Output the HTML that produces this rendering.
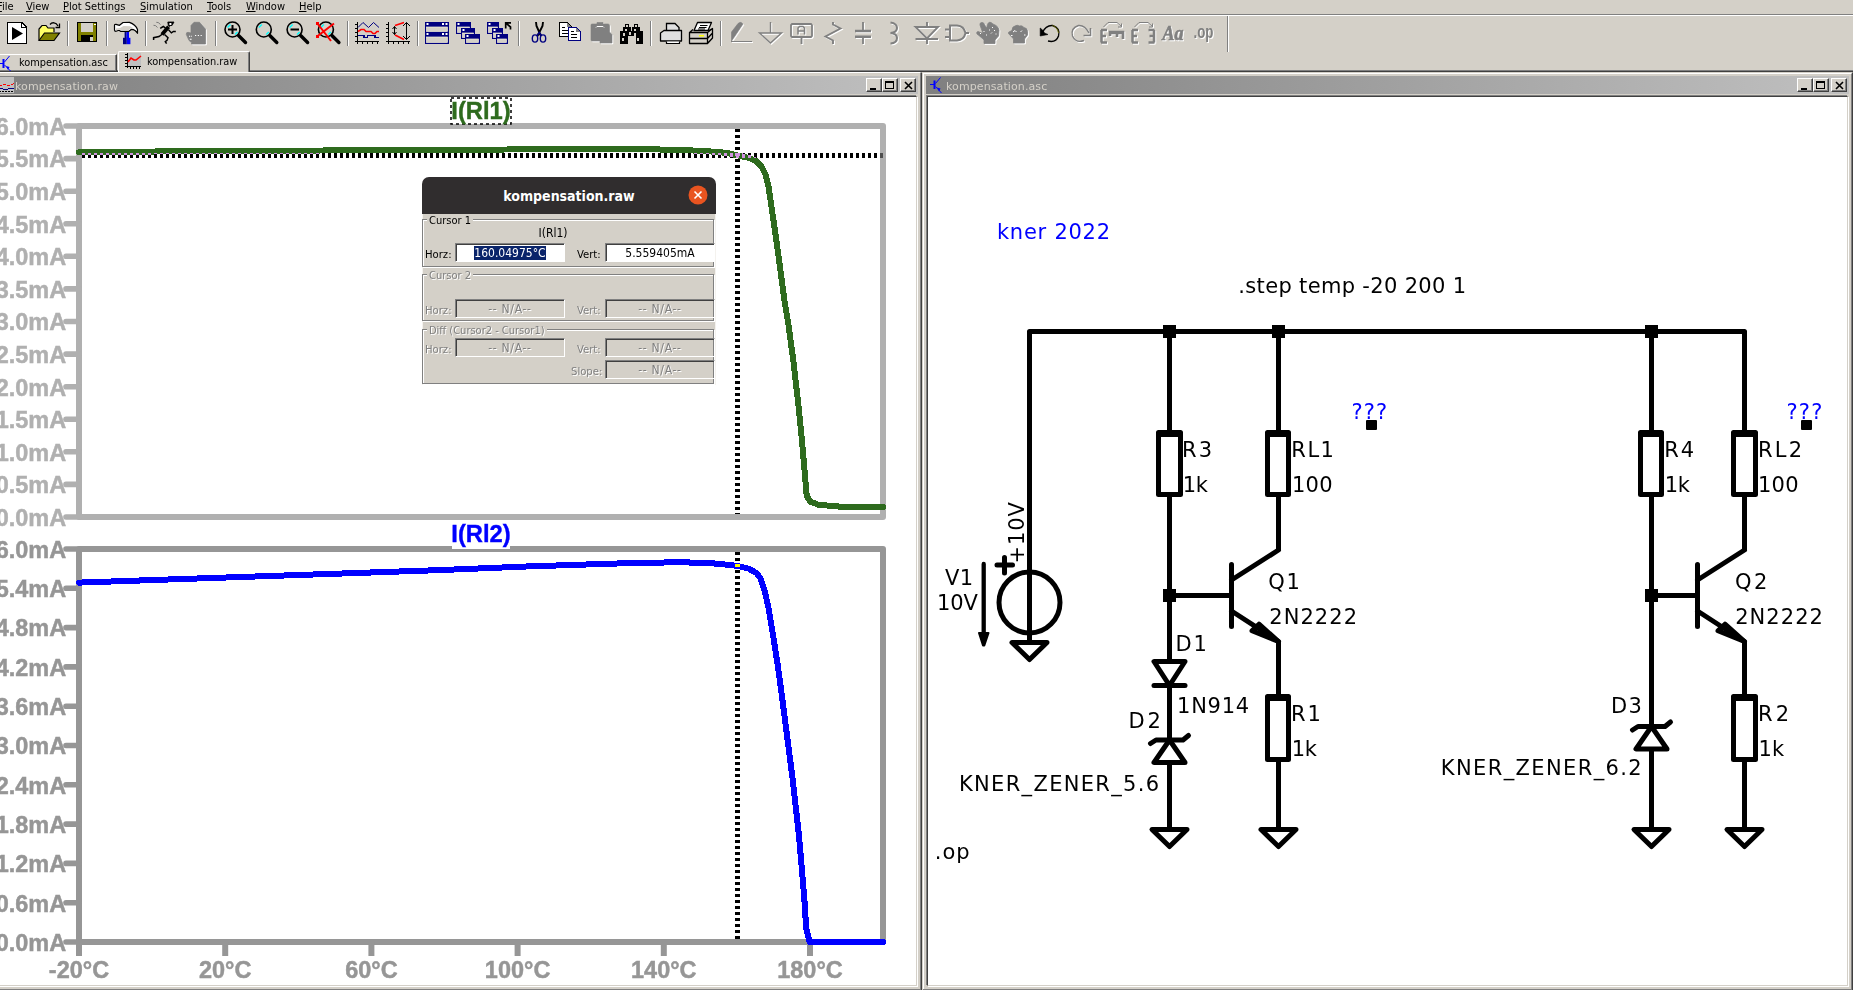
<!DOCTYPE html><html><head><meta charset="utf-8"><title>LTspice XVII - kompensation.raw</title><style>
html,body{margin:0;padding:0;}
body{width:1853px;height:990px;overflow:hidden;background:#d4d0c8;position:relative;font-family:"DejaVu Sans Condensed","DejaVu Sans","Liberation Sans",sans-serif;font-size:11px;color:#000;}
.abs{position:absolute;}
#menubar span{position:absolute;top:0px;white-space:nowrap;font-size:11px;line-height:14px;}
#menubar u{text-decoration:underline;text-underline-offset:1px;}
.hline{position:absolute;height:1px;}
.tabtxt{position:absolute;white-space:nowrap;font-size:10.9px;line-height:14px;}
.cap{position:absolute;height:18px;top:76px;}
.captxt{position:absolute;font-family:"DejaVu Sans","Liberation Sans",sans-serif;font-size:11px;line-height:18px;color:#d4d0c8;white-space:nowrap;letter-spacing:0.1px;}
.wbtn{position:absolute;width:16px;height:14px;top:78px;background:#d4d0c8;box-sizing:border-box;border:1px solid;border-color:#fff #404040 #404040 #fff;box-shadow:inset -1px -1px 0 #808080;}
</style></head><body>
<div id="menubar" class="abs" style="left:0;top:0;width:1853px;height:14px">
<span style="left:-3px"><u>F</u>ile</span>
<span style="left:26px"><u>V</u>iew</span>
<span style="left:63px"><u>P</u>lot Settings</span>
<span style="left:140px"><u>S</u>imulation</span>
<span style="left:207px"><u>T</u>ools</span>
<span style="left:246px"><u>W</u>indow</span>
<span style="left:299px"><u>H</u>elp</span>
</div>
<div class="hline" style="left:0;top:14px;width:1853px;background:#808080"></div>
<div class="hline" style="left:0;top:15px;width:1853px;background:#fff"></div>
<svg class="abs" style="left:0;top:16px" width="1853" height="36" viewBox="0 16 1853 36">
<g shape-rendering="crispEdges">
<path d="M7.5 22.5 H22 L26.5 27 V43.5 H7.5 Z" fill="#fff" stroke="#000" stroke-width="1.4"/>
<path d="M21.5 22.5 V27.5 H26.5" fill="none" stroke="#000" stroke-width="1"/>
<path d="M12 27 L23 33.5 L12 40 Z" fill="#000" shape-rendering="auto"/>
<path d="M39 40 V29 L42 25.5 H46 L48 28 H54 V32" fill="#ffff66" stroke="#000" stroke-width="1.2" shape-rendering="auto"/>
<path d="M39 40.5 L44.5 33 H59.5 L54 40.5 Z" fill="#808000" stroke="#000" stroke-width="1.2" shape-rendering="auto"/>
<path d="M50 24.5 C52 22 56 22 58 26 M55.5 27.5 H59.5 V23.5" fill="none" stroke="#000" stroke-width="1.3" shape-rendering="auto"/>
<rect x="67" y="21" width="1" height="25" fill="#808080"/><rect x="68" y="21" width="1" height="25" fill="#fff"/>
<rect x="77.5" y="22.5" width="19" height="19" fill="#808000" stroke="#000" stroke-width="1.4"/>
<rect x="81" y="23" width="12" height="9" fill="#d4d0c8"/>
<rect x="81" y="35" width="12" height="6.5" fill="#000"/>
<rect x="90" y="37" width="2.5" height="4" fill="#d4d0c8"/>
<rect x="94" y="23.5" width="1.5" height="1.5" fill="#fff"/>
<rect x="106" y="21" width="1" height="25" fill="#808080"/><rect x="107" y="21" width="1" height="25" fill="#fff"/>
</g>
<rect x="124.600" y="31" width="2" height="7" fill="#000080"/><rect x="126.600" y="31" width="2.400" height="7" fill="#0000ff"/>
<rect x="123" y="37.800" width="3.800" height="6.400" fill="#000080"/><rect x="126.800" y="37.800" width="3.600" height="6.400" fill="#0000ff"/>
<path d="M114.500 25.300 Q114.500 24.200 116 24.300 L119.500 25.300 L123 22.500 L129.500 22.400 Q135.500 24.500 137.500 29.500 L137.500 33.300 Q135.500 29.500 131.500 29.300 L129 31.300 H120.500 L119 30.300 L116 31.300 Q114.500 31.300 114.500 30 Z" fill="#fff" stroke="#000" stroke-width="1.200" stroke-linejoin="round"/>
<path d="M116 28.500 L120 28 L123.500 26 L130 26.300 L134 28.500 L131 28.300 L128.500 30.300 H121 L119.500 29.300 L116 30.300 Z" fill="#d4d0c8" stroke="none"/>
<rect x="145" y="21" width="1" height="25" fill="#808080"/><rect x="146" y="21" width="1" height="25" fill="#fff"/>
<g stroke="#000" fill="none" stroke-linecap="butt" stroke-linejoin="miter">
<path d="M167.800 22 H174 L172 25.500 H168.300 Z" fill="#000" stroke-width="0.800"/>
<rect x="169.400" y="23" width="2" height="2" fill="#fff" stroke="none"/>
<path d="M169.800 25.500 L168.800 26.500" stroke-width="1.600"/><path d="M168.600 26.800 L162 34.500" stroke-width="3.800" stroke-linecap="butt"/>
<path d="M165.500 28.200 L163.300 26.500 L160.200 28.400" stroke-width="1.500"/>
<path d="M168.500 29.800 L171.400 32.900 L173.400 31.500 H175.800" stroke-width="1.400"/>
<path d="M162.500 34 L159 36.600 L153.600 37.700 V40" stroke-width="1.500"/>
<path d="M164.500 34.500 L168 37.700 L167 40.400 L165.300 41.700 L166.600 43.700" stroke-width="1.500"/>
<path d="M156.300 22.300 L158.300 22.600 L160.500 24.500 M153.500 25.300 L155.500 25.600 L157.500 27.500" stroke="#707070" stroke-width="0.900"/>
</g>
<g transform="translate(1 1)" stroke="#fff" fill="#fff" color="#fff"><path d="M191.500 44 V42.800 L189 40.400 L186.300 34.500 Q186 32.300 188 32.300 L191 33 V25.500 L194 22.300 H199.500 L205.500 29 V44 Z" stroke-width="0.700" stroke-linejoin="round"/></g><g stroke="#808080" fill="#808080" color="#808080"><path d="M191.500 44 V42.800 L189 40.400 L186.300 34.500 Q186 32.300 188 32.300 L191 33 V25.500 L194 22.300 H199.500 L205.500 29 V44 Z" stroke-width="0.700" stroke-linejoin="round"/></g>
<path d="M195 35.500 H196.200 M197.800 35.500 H199 M200.600 35.500 H201.800 M189 36.300 H190 M190.800 36.300 H191.800 M189.800 39.300 H191.600" stroke="#fff" stroke-width="1.100" fill="none"/>
<rect x="215" y="21" width="1" height="25" fill="#808080"/><rect x="216" y="21" width="1" height="25" fill="#fff"/>
<line x1="238.5" y1="35.5" x2="245.5" y2="42.5" stroke="#000" stroke-width="3.4" stroke-linecap="round"/><circle cx="232.5" cy="29.5" r="7.5" fill="#d4d0c8" stroke="#000" stroke-width="1.6"/><path d="M227.5 27.5 L230.5 24.5" stroke="#00ffff" stroke-width="1.4" fill="none"/><path d="M235.0 34.5 L237.5 32.0" stroke="#00ffff" stroke-width="1.4" fill="none"/><path d="M228 29.5 H237 M232.5 25 V34" stroke="#000" stroke-width="2" fill="none"/>
<line x1="269.8" y1="35.5" x2="276.8" y2="42.5" stroke="#000" stroke-width="3.4" stroke-linecap="round"/><circle cx="263.8" cy="29.5" r="7.5" fill="#d4d0c8" stroke="#000" stroke-width="1.6"/><path d="M258.8 27.5 L261.8 24.5" stroke="#00ffff" stroke-width="1.4" fill="none"/><path d="M266.3 34.5 L268.8 32.0" stroke="#00ffff" stroke-width="1.4" fill="none"/>
<line x1="300.6" y1="35.5" x2="307.6" y2="42.5" stroke="#000" stroke-width="3.4" stroke-linecap="round"/><circle cx="294.6" cy="29.5" r="7.5" fill="#d4d0c8" stroke="#000" stroke-width="1.6"/><path d="M289.6 27.5 L292.6 24.5" stroke="#00ffff" stroke-width="1.4" fill="none"/><path d="M297.1 34.5 L299.6 32.0" stroke="#00ffff" stroke-width="1.4" fill="none"/><path d="M290.5 29.5 H299" stroke="#000" stroke-width="2" fill="none"/>
<line x1="331.9" y1="35.5" x2="338.9" y2="42.5" stroke="#000" stroke-width="3.4" stroke-linecap="round"/><circle cx="325.9" cy="29.5" r="7.5" fill="#d4d0c8" stroke="#000" stroke-width="1.6"/><path d="M320.9 27.5 L323.9 24.5" stroke="#00ffff" stroke-width="1.4" fill="none"/><path d="M328.4 34.5 L330.9 32.0" stroke="#00ffff" stroke-width="1.4" fill="none"/><path d="M317 23 L331 41 M334 23.500 L317 36.500" stroke="#ff0000" stroke-width="2" fill="none"/><rect x="316" y="22" width="3" height="3" fill="#ff0000"/><rect x="316" y="35" width="3" height="3" fill="#ff0000"/>
<rect x="347" y="21" width="1" height="25" fill="#808080"/><rect x="348" y="21" width="1" height="25" fill="#fff"/>
<g shape-rendering="crispEdges" fill="none" stroke-width="1">
<path d="M357.500 22 V44 M355 41.500 H379 M355 24.500 H357 M355 28.500 H357 M355 32.500 H357 M355 36.500 H357 M362.500 42 V44 M367.500 42 V44 M372.500 42 V44 M377.500 42 V44" stroke="#000" stroke-width="1.4"/>
<path d="M358 27.500 L363 22.500 L368.500 27.500 L373.500 22.500 L379 27.500" stroke="#000080" shape-rendering="auto"/>
<path d="M358 31.500 L361 29.500 H364 L366 31.500 H371 L373 33.500 H375 L377 31.500 H379" stroke="#ff0000" stroke-width="1.6" shape-rendering="auto"/>
<path d="M358 35.500 H364 V37.500 H367.500 V35.500 H375 V37.500 H379" stroke="#000080" stroke-width="1.4"/>
<path d="M388.500 22 V44 M386 41.500 H410 M386 24.500 H388 M386 28.500 H388 M386 32.500 H388 M386 36.500 H388 M393.500 42 V44 M398.500 42 V44 M403.500 42 V44 M408.500 42 V44" stroke="#000" stroke-width="1.4"/>
<path d="M395 25.500 L404 22.500 M395 35 L404 39.500" stroke="#ff0000" stroke-width="1.6" shape-rendering="auto"/>
<path d="M394.500 26.500 V34.500 M392.500 29 L394.500 26.500 L396.500 29 M392.500 32 L394.500 34.500 L396.500 32 M406.500 22.500 V39.500 M403 26 L406.500 22.500 L410 26 M403 36 L406.500 39.500 L410 36" stroke="#000" stroke-width="1" shape-rendering="auto"/>
</g>
<rect x="417" y="21" width="1" height="25" fill="#808080"/><rect x="418" y="21" width="1" height="25" fill="#fff"/>
<g>
<rect x="425" y="22" width="24" height="11" fill="#000080"/><rect x="426.5" y="27" width="21" height="4.5" fill="#d4d0c8" stroke="#f4f0d8" stroke-width="0.7"/><rect x="426.5" y="23" width="2" height="2" fill="#fff"/><rect x="425" y="32" width="24" height="12" fill="#000080"/><rect x="426.5" y="37" width="21" height="5.5" fill="#d4d0c8" stroke="#f4f0d8" stroke-width="0.7"/><rect x="426.5" y="33" width="2" height="2" fill="#fff"/>
<rect x="442" y="23" width="2" height="2" fill="#fff"/><rect x="445.500" y="23" width="2" height="2" fill="#fff"/><rect x="442" y="33" width="2" height="2" fill="#fff"/><rect x="445.500" y="33" width="2" height="2" fill="#fff"/>
<rect x="456" y="22" width="15" height="12" fill="#000080"/><rect x="457.5" y="27" width="12" height="5.5" fill="#d4d0c8" stroke="#f4f0d8" stroke-width="0.7"/><rect x="457.5" y="23" width="2" height="2" fill="#fff"/><rect x="461" y="28" width="14" height="11" fill="#000080"/><rect x="462.5" y="33" width="11" height="4.5" fill="#d4d0c8" stroke="#f4f0d8" stroke-width="0.7"/><rect x="462.5" y="29" width="2" height="2" fill="#fff"/><rect x="465" y="34" width="15" height="10" fill="#000080"/><rect x="466.5" y="39" width="12" height="3.5" fill="#d4d0c8" stroke="#f4f0d8" stroke-width="0.7"/><rect x="466.5" y="35" width="2" height="2" fill="#fff"/>
<rect x="487" y="22" width="12" height="12" fill="#000080"/><rect x="488.5" y="27" width="9" height="5.5" fill="#d4d0c8" stroke="#f4f0d8" stroke-width="0.7"/><rect x="488.5" y="23" width="2" height="2" fill="#fff"/><rect x="492" y="28" width="11" height="11" fill="#000080"/><rect x="493.5" y="33" width="8" height="4.5" fill="#d4d0c8" stroke="#f4f0d8" stroke-width="0.7"/><rect x="493.5" y="29" width="2" height="2" fill="#fff"/><rect x="496" y="34" width="12" height="10" fill="#000080"/><rect x="497.5" y="39" width="9" height="3.5" fill="#d4d0c8" stroke="#f4f0d8" stroke-width="0.7"/><rect x="497.5" y="35" width="2" height="2" fill="#fff"/>
<path d="M505.700 28.500 V22.800 H511 M506 23 L510.500 27 V29.500" stroke="#000" stroke-width="1.700" fill="none"/>
</g>
<rect x="518" y="21" width="1" height="25" fill="#808080"/><rect x="519" y="21" width="1" height="25" fill="#fff"/>
<path d="M536 22 L536.500 26 L541 36 M543 22 L542.500 26 L537.500 36" stroke="#000" stroke-width="1.900" fill="none"/>
<ellipse cx="535" cy="38.500" rx="2.700" ry="3.600" fill="none" stroke="#000080" stroke-width="1.400"/><ellipse cx="543" cy="38.500" rx="2.700" ry="3.600" fill="none" stroke="#000080" stroke-width="1.400"/>
<path d="M537 35.500 L539.300 32.500 L541.500 35.500" stroke="#000080" stroke-width="1.400" fill="none"/>
<g shape-rendering="crispEdges">
<path d="M559.500 22.500 H567 L571.500 27 V36.500 H559.500 Z" fill="#fff" stroke="#000" stroke-width="1"/>
<path d="M567 22.500 V27 H571.500 Z" fill="#808080" stroke="none"/>
<path d="M562 27.500 H565 M562 30.500 H568 M562 33.500 H568" stroke="#000" stroke-width="1"/>
<path d="M568.500 27.500 H576 L580.500 32 V40.500 H568.500 Z" fill="#fff" stroke="#000080" stroke-width="1"/>
<path d="M576 27.500 V32 H580.500 Z" fill="#808080" stroke="none"/>
<path d="M571 31.500 H574 M571 34.500 H577 M571 37.500 H577" stroke="#000" stroke-width="1"/>
</g>
<g transform="translate(1 1)" stroke="#fff" fill="#fff" color="#fff"><path d="M591 25 Q591 24 592 24 H597 V22.500 H603 V24 H608 Q609.500 24 609.500 25.500 V32 L612 34.500 V43 H600 V41 H592 Q591 41 591 40 Z" stroke-width="0.6"/></g><g stroke="#808080" fill="#808080" color="#808080"><path d="M591 25 Q591 24 592 24 H597 V22.500 H603 V24 H608 Q609.500 24 609.500 25.500 V32 L612 34.500 V43 H600 V41 H592 Q591 41 591 40 Z" stroke-width="0.6"/></g>
<path d="M596 27.500 L597 26.500 H603 L604 27.500" stroke="#fff" stroke-width="1" fill="none"/>
<g shape-rendering="crispEdges" fill="#000">
<path d="M625 23.500 H629 V27 H631 V31 H632 V27 H634 V23.500 H638 V27 H640 V31 H643 V43.500 H635.500 V36 H627.500 V43.500 H620 V31 H623 V27 H625 Z"/>
<rect x="626" y="25" width="2" height="2" fill="#d4d0c8"/><rect x="635" y="25" width="2" height="2" fill="#d4d0c8"/><rect x="625" y="29" width="2" height="2" fill="#d4d0c8"/><rect x="634" y="29" width="2" height="2" fill="#d4d0c8"/><rect x="623" y="33" width="1.500" height="3" fill="#d4d0c8"/><rect x="629" y="32" width="2" height="3" fill="#d4d0c8"/><rect x="634" y="33" width="1.500" height="3" fill="#d4d0c8"/><rect x="622" y="38" width="2" height="3" fill="#d4d0c8"/><rect x="637" y="38" width="2" height="3" fill="#d4d0c8"/>
</g>
<rect x="650" y="21" width="1" height="25" fill="#808080"/><rect x="651" y="21" width="1" height="25" fill="#fff"/>
<path d="M666.500 30 V23.500 H675 L679 27.500 V30" fill="#e0e0e0" stroke="#000" stroke-width="1.3"/>
<path d="M660.500 41 V33 L664 30.500 H681.500 V41 Z" fill="#e0e0e0" stroke="#000" stroke-width="1.3" stroke-linejoin="round"/>
<path d="M666.500 41.500 V43.500 H679.500 V41.500" fill="#fff" stroke="#000" stroke-width="1.2"/>
<path d="M697.500 22.500 H711.500 L708 30.500 H694 Z" fill="#fff" stroke="#000" stroke-width="1.3" stroke-linejoin="round"/>
<path d="M700 25.500 H707.500 M699 27.500 H706.500 M698 29 H705" stroke="#000" stroke-width="1" fill="none"/>
<path d="M689.500 32.500 L693 29.500 M708 31 L712.500 28.500 V38 L707.500 43.500 H689.500 V32.500 H707.500 V43.500 M689.500 38.500 H707.500 L712.500 33 M707.500 32.500 L712.500 28.500" fill="none" stroke="#000" stroke-width="1.3" stroke-linejoin="round"/>
<rect x="699" y="35" width="5" height="1.500" fill="#ffff00"/>
<rect x="720" y="21" width="1" height="25" fill="#808080"/><rect x="721" y="21" width="1" height="25" fill="#fff"/>
<g transform="translate(1 1)" stroke="#fff" fill="#fff" color="#fff"><path d="M731.500 41 V32 L738 23.500 Q741 21 743 24 L735 36 Z" stroke-width="0.6"/><path d="M731 41.500 H752" fill="none" stroke-width="1"/></g><g stroke="#808080" fill="#808080" color="#808080"><path d="M731.500 41 V32 L738 23.500 Q741 21 743 24 L735 36 Z" stroke-width="0.6"/><path d="M731 41.500 H752" fill="none" stroke-width="1"/></g>
<g transform="translate(1 1)" stroke="#fff" fill="#fff" color="#fff"><path d="M770.500 22 V33 M759.500 33 H781.500 L770.500 43 Z" fill="none" stroke-width="1.4"/></g><g stroke="#808080" fill="#808080" color="#808080"><path d="M770.500 22 V33 M759.500 33 H781.500 L770.500 43 Z" fill="none" stroke-width="1.4"/></g>
<g transform="translate(1 1)" stroke="#fff" fill="#fff" color="#fff"><path d="M792 24 H811 L812 25 V36 L811 37 H792 L791 36 V25 Z M801.500 37 V44" fill="none" stroke-width="1.800"/><path d="M798 34.500 V28 L799.500 26.500 H803 L804.500 28 V34.500 M798 31 H804.500" fill="none" stroke-width="1.500"/></g><g stroke="#808080" fill="#808080" color="#808080"><path d="M792 24 H811 L812 25 V36 L811 37 H792 L791 36 V25 Z M801.500 37 V44" fill="none" stroke-width="1.800"/><path d="M798 34.500 V28 L799.500 26.500 H803 L804.500 28 V34.500 M798 31 H804.500" fill="none" stroke-width="1.500"/></g>
<g transform="translate(1 1)" stroke="#fff" fill="#fff" color="#fff"><path d="M833 22 V24.500 L840.500 28.500 L825.500 36.500 L833 40.500 V44" fill="none" stroke-width="1.900"/></g><g stroke="#808080" fill="#808080" color="#808080"><path d="M833 22 V24.500 L840.500 28.500 L825.500 36.500 L833 40.500 V44" fill="none" stroke-width="1.900"/></g>
<g transform="translate(1 1)" stroke="#fff" fill="#fff" color="#fff"><path d="M863 22 V30.500 M863 36.500 V44" fill="none" stroke-width="1.800"/><path d="M855 31 H871 M855 36.700 H871" fill="none" stroke-width="2.400"/></g><g stroke="#808080" fill="#808080" color="#808080"><path d="M863 22 V30.500 M863 36.500 V44" fill="none" stroke-width="1.800"/><path d="M855 31 H871 M855 36.700 H871" fill="none" stroke-width="2.400"/></g>
<g transform="translate(1 1)" stroke="#fff" fill="#fff" color="#fff"><path d="M890.500 22.500 Q897 23.500 897 28 Q897 32.500 890.500 33 Q897 33.500 897 38 Q897 43 890.500 43.500" fill="none" stroke-width="2"/></g><g stroke="#808080" fill="#808080" color="#808080"><path d="M890.500 22.500 Q897 23.500 897 28 Q897 32.500 890.500 33 Q897 33.500 897 38 Q897 43 890.500 43.500" fill="none" stroke-width="2"/></g>
<g transform="translate(1 1)" stroke="#fff" fill="#fff" color="#fff"><path d="M927 22 V27 M927 39 V44 M915.500 27 H938 L927 38.500 Z M915.500 39 H938" fill="none" stroke-width="1.900"/></g><g stroke="#808080" fill="#808080" color="#808080"><path d="M927 22 V27 M927 39 V44 M915.500 27 H938 L927 38.500 Z M915.500 39 H938" fill="none" stroke-width="1.900"/></g>
<g transform="translate(1 1)" stroke="#fff" fill="#fff" color="#fff"><path d="M950 25.500 H957 Q964 26 965.500 33 Q964 40 957 40.500 H950 Z M945 29.500 H950 M945 37 H950 M965.500 33 H969" fill="none" stroke-width="2"/></g><g stroke="#808080" fill="#808080" color="#808080"><path d="M950 25.500 H957 Q964 26 965.500 33 Q964 40 957 40.500 H950 Z M945 29.500 H950 M945 37 H950 M965.500 33 H969" fill="none" stroke-width="2"/></g>
<g transform="translate(1 1)" stroke="#fff" fill="#fff" color="#fff"><path d="M984 43.500 V40 L977 34 Q976 32 978 31.500 L983 33.500 L980 25 Q979.500 22.500 982 22.500 Q984 22.500 984.500 24.500 L986.500 28 L988 23.500 Q989 21.500 991 22.500 L993 24 L996 25.500 Q998.500 27 999 30 L998.500 36 L995 40 V43.500 Z" stroke-width="0.800"/></g><g stroke="#808080" fill="#808080" color="#808080"><path d="M984 43.500 V40 L977 34 Q976 32 978 31.500 L983 33.500 L980 25 Q979.500 22.500 982 22.500 Q984 22.500 984.500 24.500 L986.500 28 L988 23.500 Q989 21.500 991 22.500 L993 24 L996 25.500 Q998.500 27 999 30 L998.500 36 L995 40 V43.500 Z" stroke-width="0.800"/></g>
<path d="M983.500 31 L984.500 32 M989 30 H990 M992 27 L993 28 M994 30.500 H995 M986 35 H987 M991 33.500 L992 32.500 M995.500 34 H996.500 M980 33.500 H981" stroke="#fff" stroke-width="1" fill="none"/>
<g transform="translate(1 1)" stroke="#fff" fill="#fff" color="#fff"><path d="M1013.500 43 V39 L1008.500 33.500 Q1008 32 1010 31.500 L1012 30.500 Q1012 26.500 1015 26 Q1017 24.500 1019.500 26 Q1022 25 1024 27.500 Q1027.500 28 1027.500 31.500 V35 L1024.500 39 V43 Z" stroke-width="0.800"/></g><g stroke="#808080" fill="#808080" color="#808080"><path d="M1013.500 43 V39 L1008.500 33.500 Q1008 32 1010 31.500 L1012 30.500 Q1012 26.500 1015 26 Q1017 24.500 1019.500 26 Q1022 25 1024 27.500 Q1027.500 28 1027.500 31.500 V35 L1024.500 39 V43 Z" stroke-width="0.800"/></g>
<path d="M1013 32 L1015 30.500 L1016.500 32 M1020.500 32 L1022 30.500 M1011 35.500 H1012.500 M1024 35 H1025.500" stroke="#fff" stroke-width="1" fill="none"/>
<path d="M1048 41 Q1056 43 1058.500 36 Q1060.500 28 1052.500 25.500 Q1046 25 1042 33" fill="none" stroke="#000" stroke-width="1.400"/>
<path d="M1040.200 28 L1040.200 36 L1048 34.500 L1044.500 33 L1043 30.500 Z" fill="#000" stroke="#000" stroke-width="0.600"/>
<path d="M1052.500 25.500 Q1057.500 27 1058.500 33" fill="none" stroke="#808000" stroke-width="1" opacity="0.8"/>
<g transform="translate(1 1)" stroke="#fff" fill="#fff" color="#fff"><path d="M1084 40.500 Q1076 43.500 1072.500 36 Q1070.500 28 1078.500 25.500 Q1085 25 1089 33" fill="none" stroke-width="1.400"/><path d="M1090.500 28 V35.500 H1083.500" fill="none" stroke-width="1.600"/></g><g stroke="#808080" fill="#808080" color="#808080"><path d="M1084 40.500 Q1076 43.500 1072.500 36 Q1070.500 28 1078.500 25.500 Q1085 25 1089 33" fill="none" stroke-width="1.400"/><path d="M1090.500 28 V35.500 H1083.500" fill="none" stroke-width="1.600"/></g>
<g transform="translate(1 1)" stroke="#fff" fill="#fff" color="#fff"><path d="M1101.500 30 V42.500 M1101 30 H1107 M1101 36 H1106 M1101 42.500 H1107" fill="none" stroke-width="2.500"/><path d="M1110 36 V32 H1123 V39 M1117 32 V37 M1110 33 H1123" fill="none" stroke-width="2.600"/><path d="M1103.500 27 L1108 22.500 H1117 L1121.500 26.500 M1118 27 H1121.500 V23.500" fill="none" stroke-width="1"/></g><g stroke="#808080" fill="#808080" color="#808080"><path d="M1101.500 30 V42.500 M1101 30 H1107 M1101 36 H1106 M1101 42.500 H1107" fill="none" stroke-width="2.500"/><path d="M1110 36 V32 H1123 V39 M1117 32 V37 M1110 33 H1123" fill="none" stroke-width="2.600"/><path d="M1103.500 27 L1108 22.500 H1117 L1121.500 26.500 M1118 27 H1121.500 V23.500" fill="none" stroke-width="1"/></g>
<g transform="translate(1 1)" stroke="#fff" fill="#fff" color="#fff"><path d="M1132.500 30 V42.500 M1132 30 H1138 M1132 36 H1137 M1132 42.500 H1138" fill="none" stroke-width="2.500"/><path d="M1154 30 V42.500 M1154.500 30 H1148.500 M1154.500 36 H1149.500 M1154.500 42.500 H1148.500" fill="none" stroke-width="2.500"/><path d="M1134.500 27 L1139 22.500 H1148 L1152.500 26.500 M1149 27 H1152.500 V23.500" fill="none" stroke-width="1"/></g><g stroke="#808080" fill="#808080" color="#808080"><path d="M1132.500 30 V42.500 M1132 30 H1138 M1132 36 H1137 M1132 42.500 H1138" fill="none" stroke-width="2.500"/><path d="M1154 30 V42.500 M1154.500 30 H1148.500 M1154.500 36 H1149.500 M1154.500 42.500 H1148.500" fill="none" stroke-width="2.500"/><path d="M1134.500 27 L1139 22.500 H1148 L1152.500 26.500 M1149 27 H1152.500 V23.500" fill="none" stroke-width="1"/></g>
<g font-family="Liberation Serif, DejaVu Serif, serif" font-style="italic" font-weight="bold" font-size="22">
<text x="1163.500" y="41" fill="#fff" stroke="#fff" stroke-width="0.7" textLength="21" lengthAdjust="spacingAndGlyphs">Aa</text><text x="1162.500" y="40" fill="#808080" stroke="#808080" stroke-width="0.7" textLength="21" lengthAdjust="spacingAndGlyphs">Aa</text>
</g>
<g font-family="Liberation Sans, DejaVu Sans, sans-serif" font-weight="bold" font-size="17.5" stroke="none">
<text x="1194.500" y="38.700" fill="#fff" textLength="20" lengthAdjust="spacingAndGlyphs">.op</text><text x="1193.500" y="37.700" fill="#808080" textLength="20" lengthAdjust="spacingAndGlyphs">.op</text>
</g>
<rect x="1227" y="16" width="1" height="36" fill="#808080"/><rect x="1228" y="16" width="1" height="36" fill="#fff"/>
</svg>

<div class="abs" style="left:0;top:70px;width:1853px;height:2px;background:#404040"></div>
<div class="abs" style="left:0;top:70px;width:1853px;height:1px;background:#808080"></div>
<div class="abs" style="left:-2px;top:54px;width:119px;height:17px;box-sizing:border-box;border-top:1px solid #fff;border-right:1px solid #404040;box-shadow:inset -1px 0 0 #808080"></div>
<div class="abs" style="left:118px;top:51px;width:132px;height:22px;background:#d4d0c8;box-sizing:border-box;border-top:1px solid #fff;border-left:1px solid #fff;border-right:1px solid #404040;box-shadow:inset -1px 0 0 #808080;border-radius:2px 2px 0 0"></div>
<svg class="abs" style="left:0;top:54px" width="16" height="17" viewBox="0 0 16 17"><g stroke="#0000ff" fill="none" stroke-width="1"><path d="M-2 9.500 H3"/><path d="M3.500 5 V14" stroke-width="2"/><path d="M4.500 8 L9.500 2"/><path d="M4.500 11 L10.500 17"/></g><path d="M6 12 L9.500 13 L8 16 Z" fill="#0000ff"/></svg>
<svg class="abs" style="left:125px;top:53px" width="17" height="16" viewBox="0 0 17 16" shape-rendering="crispEdges"><rect x="3" y="0" width="13" height="13" fill="#c0c0c0"/><path d="M2.5 0 V15 M0 13.5 H16 M0 1.5 H3 M0 4.5 H3 M0 7.5 H3 M0 10.5 H3 M5.5 13 V16 M8.5 13 V16 M11.5 13 V16 M14.5 13 V16" stroke="#000" stroke-width="1" fill="none"/><path d="M3 9 L6 5 L9 7 L11 7 L16 3" stroke="#ff0000" stroke-width="1.6" fill="none" shape-rendering="auto"/></svg>
<span class="tabtxt" style="left:19px;top:56px">kompensation.asc</span>
<span class="tabtxt" style="left:147px;top:55px">kompensation.raw</span>


<div class="abs" style="left:-4px;top:72px;width:926px;height:920px;background:#d4d0c8;box-sizing:border-box;border:1px solid;border-color:#d4d0c8 #404040 #404040 #d4d0c8;"></div>
<div class="abs" style="left:-4px;top:72px;width:925px;height:920px;box-sizing:border-box;border:1px solid;border-color:#fff #808080 #808080 #fff;"></div>
<div class="cap" style="left:0;width:918px;background:linear-gradient(to right,#808080,#c0c0c0)"></div>
<div class="abs" style="left:-2px;top:77px;width:16px;height:16px;background:#c0c0c0"></div>
<svg class="abs" style="left:0;top:77px" width="14" height="16" shape-rendering="crispEdges"><path d="M0 8.5 H2 M3 7.5 H6 M7 8.5 H10 M11 7.5 H13 M13 6.5 H14" stroke="#ff0000" stroke-width="1" fill="none"/><path d="M0 11.5 H3 M3 12.5 H8 M8 11.5 H14" stroke="#000080" stroke-width="1" fill="none"/><path d="M0 14.5 H1 M2 14.5 H4 M5 14.5 H7 M8 14.5 H10 M11 14.5 H13" stroke="#000" stroke-width="1"/></svg>
<span class="captxt" style="left:15px;top:78px">kompensation.raw</span>

<div class="wbtn" style="left:866px"><div class="abs" style="left:3px;top:9px;width:6px;height:2px;background:#000"></div></div><div class="wbtn" style="left:882px"><div class="abs" style="left:2px;top:2px;width:9px;height:8px;box-sizing:border-box;border:1px solid #000;border-top-width:2px"></div></div><div class="wbtn" style="left:900px"><svg class="abs" style="left:3px;top:2px" width="9" height="9"><path d="M1 1 L8 8 M8 1 L1 8" stroke="#000" stroke-width="1.6" fill="none"/></svg></div>
<div class="abs" style="left:-2px;top:96px;width:919px;height:890px;background:#fff;box-sizing:border-box;border:1px solid;border-color:#404040 #d4d0c8 #d4d0c8 #404040;box-shadow:-1px -1px 0 #808080,1px 1px 0 #fff"></div>
<svg class="abs" style="left:0;top:97px" width="916" height="888" viewBox="0 97 916 888">
<g stroke="#b0b0b0" stroke-width="6" fill="none" stroke-linecap="round" stroke-linejoin="round">
<rect x="79" y="126.0" width="804" height="391.0"/>
<path d="M66 126.0 H79" stroke-width="5.6"/>
<path d="M66 158.6 H79" stroke-width="5.6"/>
<path d="M66 191.2 H79" stroke-width="5.6"/>
<path d="M66 223.8 H79" stroke-width="5.6"/>
<path d="M66 256.3 H79" stroke-width="5.6"/>
<path d="M66 288.9 H79" stroke-width="5.6"/>
<path d="M66 321.5 H79" stroke-width="5.6"/>
<path d="M66 354.1 H79" stroke-width="5.6"/>
<path d="M66 386.7 H79" stroke-width="5.6"/>
<path d="M66 419.2 H79" stroke-width="5.6"/>
<path d="M66 451.8 H79" stroke-width="5.6"/>
<path d="M66 484.4 H79" stroke-width="5.6"/>
<path d="M66 517.0 H79" stroke-width="5.6"/>
</g>
<g fill="#b0b0b0" stroke="#b0b0b0" stroke-width="0.5" font-family="Liberation Sans, Arial, sans-serif" font-weight="bold" font-size="24.6" text-anchor="end">
<text transform="translate(66.2 134.8) scale(0.955 1)">6.0mA</text>
<text transform="translate(66.2 167.4) scale(0.955 1)">5.5mA</text>
<text transform="translate(66.2 200.0) scale(0.955 1)">5.0mA</text>
<text transform="translate(66.2 232.6) scale(0.955 1)">4.5mA</text>
<text transform="translate(66.2 265.1) scale(0.955 1)">4.0mA</text>
<text transform="translate(66.2 297.7) scale(0.955 1)">3.5mA</text>
<text transform="translate(66.2 330.3) scale(0.955 1)">3.0mA</text>
<text transform="translate(66.2 362.9) scale(0.955 1)">2.5mA</text>
<text transform="translate(66.2 395.5) scale(0.955 1)">2.0mA</text>
<text transform="translate(66.2 428.1) scale(0.955 1)">1.5mA</text>
<text transform="translate(66.2 460.6) scale(0.955 1)">1.0mA</text>
<text transform="translate(66.2 493.2) scale(0.955 1)">0.5mA</text>
<text transform="translate(66.2 525.8) scale(0.955 1)">0.0mA</text>
</g>
<g stroke="#969696" stroke-width="6" fill="none" stroke-linecap="round" stroke-linejoin="round">
<rect x="79" y="549.0" width="804" height="393.0"/>
<path d="M66 549.0 H79" stroke-width="5.6"/>
<path d="M66 588.3 H79" stroke-width="5.6"/>
<path d="M66 627.6 H79" stroke-width="5.6"/>
<path d="M66 666.9 H79" stroke-width="5.6"/>
<path d="M66 706.2 H79" stroke-width="5.6"/>
<path d="M66 745.5 H79" stroke-width="5.6"/>
<path d="M66 784.8 H79" stroke-width="5.6"/>
<path d="M66 824.1 H79" stroke-width="5.6"/>
<path d="M66 863.4 H79" stroke-width="5.6"/>
<path d="M66 902.7 H79" stroke-width="5.6"/>
<path d="M66 942.0 H79" stroke-width="5.6"/>
<path d="M79.0 942.0 V956" stroke-linecap="butt"/>
<path d="M225.2 942.0 V956" stroke-linecap="butt"/>
<path d="M371.4 942.0 V956" stroke-linecap="butt"/>
<path d="M517.5999999999999 942.0 V956" stroke-linecap="butt"/>
<path d="M663.8 942.0 V956" stroke-linecap="butt"/>
<path d="M810.0 942.0 V956" stroke-linecap="butt"/>
</g>
<g fill="#969696" stroke="#969696" stroke-width="0.5" font-family="Liberation Sans, Arial, sans-serif" font-weight="bold" font-size="24.6" text-anchor="end">
<text transform="translate(66.2 557.8) scale(0.955 1)">6.0mA</text>
<text transform="translate(66.2 597.1) scale(0.955 1)">5.4mA</text>
<text transform="translate(66.2 636.4) scale(0.955 1)">4.8mA</text>
<text transform="translate(66.2 675.7) scale(0.955 1)">4.2mA</text>
<text transform="translate(66.2 715.0) scale(0.955 1)">3.6mA</text>
<text transform="translate(66.2 754.3) scale(0.955 1)">3.0mA</text>
<text transform="translate(66.2 793.6) scale(0.955 1)">2.4mA</text>
<text transform="translate(66.2 832.9) scale(0.955 1)">1.8mA</text>
<text transform="translate(66.2 872.2) scale(0.955 1)">1.2mA</text>
<text transform="translate(66.2 911.5) scale(0.955 1)">0.6mA</text>
<text transform="translate(66.2 950.8) scale(0.955 1)">0.0mA</text>
</g>
<g fill="#969696" stroke="#969696" stroke-width="0.5" font-family="Liberation Sans, Arial, sans-serif" font-weight="bold" font-size="24.6" text-anchor="middle">
<text transform="translate(79.0 977.8) scale(0.955 1)">-20°C</text>
<text transform="translate(225.2 977.8) scale(0.955 1)">20°C</text>
<text transform="translate(371.4 977.8) scale(0.955 1)">60°C</text>
<text transform="translate(517.6 977.8) scale(0.955 1)">100°C</text>
<text transform="translate(663.8 977.8) scale(0.955 1)">140°C</text>
<text transform="translate(810.0 977.8) scale(0.955 1)">180°C</text>
</g>
<polyline points="79.0,152.3 155.0,151.5 240.0,151.0 323.0,150.5 415.0,150.0 507.0,149.5 585.0,149.2 660.0,149.5 693.0,150.5 711.0,151.5 722.0,152.4 730.0,153.6 740.0,156.0 750.0,158.2 756.4,161.2 761.4,166.4 765.5,174.4 768.5,186.6 771.5,206.8 775.6,235.0 780.6,271.4 784.6,301.7 788.5,325.0 793.3,360.4 798.4,404.8 802.4,445.3 805.5,481.6 806.7,495.8 810.5,501.8 818.6,504.8 840.8,506.7 883.0,507.0" stroke="#2e6b1e" stroke-width="6" fill="none" stroke-linejoin="round" stroke-linecap="round" shape-rendering="crispEdges"/>
<polyline points="79.0,582.6 440.0,570.1 526.0,566.5 612.7,563.6 678.3,562.2 700.0,562.8 716.3,563.6 737.0,565.8 748.5,568.6 756.6,573.0 760.6,578.6 764.6,590.7 768.7,608.9 772.7,633.0 777.8,665.5 781.8,695.0 792.6,778.8 799.1,836.6 804.4,899.7 806.2,928.6 809.6,942.2 883.0,942.2" stroke="#0000ff" stroke-width="6" fill="none" stroke-linejoin="round" stroke-linecap="round" shape-rendering="crispEdges"/>
<g stroke="#fff" stroke-width="5" stroke-dasharray="3 3" fill="none" shape-rendering="crispEdges" style="mix-blend-mode:difference">
<path d="M82 155.5 H885"/>
<path d="M737.5 129 V514"/>
<path d="M737.5 552 V939"/>
</g>
<rect x="451" y="98" width="60" height="26" fill="#fff" stroke="#000" stroke-width="1.5" stroke-dasharray="3 3"/>
<text transform="translate(481 118.7) scale(0.965 1)" fill="#2e6b1e" stroke="#2e6b1e" stroke-width="0.4" font-family="Liberation Sans, Arial, sans-serif" font-weight="bold" font-size="24.6" text-anchor="middle">I(Rl1)</text>
<rect x="452" y="522" width="58" height="27" fill="#fff"/>
<text transform="translate(481 542) scale(0.965 1)" fill="#0000ff" stroke="#0000ff" stroke-width="0.4" font-family="Liberation Sans, Arial, sans-serif" font-weight="bold" font-size="24.6" text-anchor="middle">I(Rl2)</text>
</svg>
<style>
#dlg{position:absolute;left:422px;top:177px;width:294px;height:208px;}
#dlg .tb{position:absolute;left:0;top:0;width:294px;height:37px;background:#302d2e;border-radius:7px 7px 0 0;}
#dlg .tt{position:absolute;left:0;top:0;width:294px;text-align:center;font-family:"DejaVu Sans Condensed","DejaVu Sans","Liberation Sans",sans-serif;font-weight:bold;font-size:14px;line-height:39px;color:#fff;white-space:nowrap;}
#dlg .body{position:absolute;left:0;top:37px;width:294px;height:171px;background:#d4d0c8;box-sizing:border-box;border:1px solid #f4f2ee;border-top:none}
#dlg .grp{position:absolute;left:0px;width:292px;box-sizing:border-box;border:1px solid #808080;box-shadow:inset 1px 1px 0 #fff, 1px 1px 0 #fff;}
#dlg .gl{position:absolute;left:4px;top:-6px;background:#d4d0c8;padding:0 2px;font-size:11px;line-height:14px;white-space:nowrap;}
#dlg .lb{position:absolute;font-size:11.2px;line-height:14px;white-space:nowrap;}
#dlg .dis{color:#808080;text-shadow:1px 1px 0 #fff;}
#dlg .ed.dis{letter-spacing:0.7px;}
#dlg .ed{position:absolute;height:19px;box-sizing:border-box;border:1px solid;border-color:#808080 #fff #fff #808080;box-shadow:inset 1px 1px 0 #404040;text-align:center;font-size:12px;line-height:19px;white-space:nowrap;}
#dlg .w{background:#fff;}
#dlg .sel{background:#0a246a;color:#fff;padding:0;}
</style><div id="dlg">
<div class="tb"></div><div class="tt">kompensation.raw</div>
<svg class="abs" style="left:266px;top:8px" width="20" height="20"><circle cx="10" cy="10" r="9.5" fill="#e95420"/><path d="M6.5 6.5 L13.5 13.5 M13.5 6.5 L6.5 13.5" stroke="#fff" stroke-width="1.6" fill="none"/></svg>
<div class="body"></div>
<div class="grp" style="top:42px;height:48px"><span class="gl">Cursor 1</span></div>
<span class="lb" style="left:0;width:262px;text-align:center;top:49px;font-size:12px">I(Rl1)</span>
<span class="lb" style="left:3px;top:71px">Horz:</span>
<div class="ed w" style="left:33px;top:66px;width:110px"><span class="sel">160.04975°C</span></div>
<span class="lb" style="left:155px;top:71px">Vert:</span>
<div class="ed w" style="left:183px;top:66px;width:110px">5.559405mA</div>

<div class="grp" style="top:97px;height:47px"><span class="gl dis">Cursor 2</span></div>
<span class="lb dis" style="left:3px;top:127px">Horz:</span>
<div class="ed dis" style="left:33px;top:122px;width:110px">-- N/A--</div>
<span class="lb dis" style="left:155px;top:127px">Vert:</span>
<div class="ed dis" style="left:183px;top:122px;width:110px">-- N/A--</div>

<div class="grp" style="top:152px;height:55px"><span class="gl dis">Diff (Cursor2 - Cursor1)</span></div>
<span class="lb dis" style="left:3px;top:166px">Horz:</span>
<div class="ed dis" style="left:33px;top:161px;width:110px">-- N/A--</div>
<span class="lb dis" style="left:155px;top:166px">Vert:</span>
<div class="ed dis" style="left:183px;top:161px;width:110px">-- N/A--</div>
<span class="lb dis" style="left:149px;top:188px">Slope:</span>
<div class="ed dis" style="left:183px;top:183px;width:110px">-- N/A--</div>
</div>

<div class="abs" style="left:922px;top:72px;width:931px;height:920px;background:#d4d0c8;box-sizing:border-box;border:1px solid;border-color:#d4d0c8 #404040 #404040 #d4d0c8;"></div>
<div class="abs" style="left:923px;top:73px;width:929px;height:918px;box-sizing:border-box;border:1px solid;border-color:#fff #808080 #808080 #fff;"></div>
<div class="cap" style="left:926px;width:923px;background:linear-gradient(to right,#808080,#c0c0c0)"></div>
<svg class="abs" style="left:928px;top:77px" width="16" height="17" viewBox="0 0 16 17"><g stroke="#0000ff" fill="none" stroke-width="1"><path d="M2 7.500 H6"/><path d="M6.500 3.500 V12" stroke-width="2"/><path d="M7.500 6.500 L12.500 0.500"/><path d="M7.500 9.500 L13.500 16"/></g><path d="M9 10.500 L12.500 11.500 L11 14.500 Z" fill="#0000ff"/></svg>
<span class="captxt" style="left:946px;top:78px">kompensation.asc</span>

<div class="wbtn" style="left:1797px"><div class="abs" style="left:3px;top:9px;width:6px;height:2px;background:#000"></div></div><div class="wbtn" style="left:1813px"><div class="abs" style="left:2px;top:2px;width:9px;height:8px;box-sizing:border-box;border:1px solid #000;border-top-width:2px"></div></div><div class="wbtn" style="left:1831px"><svg class="abs" style="left:3px;top:2px" width="9" height="9"><path d="M1 1 L8 8 M8 1 L1 8" stroke="#000" stroke-width="1.6" fill="none"/></svg></div>
<div class="abs" style="left:927px;top:96px;width:921px;height:890px;background:#fff;box-sizing:border-box;border:1px solid;border-color:#404040 #d4d0c8 #d4d0c8 #404040;box-shadow:-1px -1px 0 #808080,1px 1px 0 #fff"></div>
<svg class="abs" style="left:928px;top:97px" width="919" height="888" viewBox="928 97 919 888">
<g stroke="#000" stroke-width="5" fill="none" stroke-linecap="butt" stroke-linejoin="miter">
<path d="M1029.5 641 V331.5 H1744.5 V432" stroke-linejoin="round"/>
<circle cx="1029.5" cy="602.5" r="30.5"/>
<path d="M1012.0 642.5 H1047.0 L1029.5 659.5 Z" stroke-linejoin="round"/>
<path d="M997 565 H1012.5 M1004.5 557.5 V573" stroke-linecap="round"/>
<path d="M983.700 564 V634" stroke-linecap="round" stroke-width="4.300"/>
<path d="M979 633 H988.500 L984.300 645.500 H983 Z" fill="#000" stroke-width="2" stroke-linejoin="round"/>
<path d="M1169.5 331.5 V432 M1169.5 495 V661 M1169.5 685 V740 M1169.5 762 V828"/>
<rect x="1158.5" y="432.5" width="22" height="62" stroke-linejoin="round"/><rect x="1160" y="434" width="19" height="3" fill="#000" stroke="none"/>
<path d="M1154 661.5 H1185 L1169.5 685.5 Z" stroke-linejoin="round"/>
<path d="M1154 685.5 H1185" stroke-linecap="round"/>
<path d="M1154 762.5 H1185 L1169.5 740 Z" stroke-linejoin="round"/>
<path d="M1150.5 743.5 L1156 740 H1183 L1188.5 735.5" stroke-linecap="round" stroke-linejoin="round"/>
<path d="M1152.0 829.5 H1187.0 L1169.5 846.5 Z" stroke-linejoin="round"/>
<path d="M1278.5 331.5 V432 M1278.5 495 V550 M1278.5 642 V695 M1278.5 760 V828"/>
<rect x="1267.5" y="432.5" width="21" height="62" stroke-linejoin="round"/><rect x="1269" y="434" width="18" height="3" fill="#000" stroke="none"/>
<rect x="1267.5" y="696.5" width="21" height="63" stroke-linejoin="round"/><rect x="1269" y="698" width="18" height="3" fill="#000" stroke="none"/>
<path d="M1261.0 829.5 H1296.0 L1278.5 846.5 Z" stroke-linejoin="round"/>
<path d="M1169.5 595.5 H1231.5"/>
<path d="M1231.5 564.5 V626.5" stroke-linecap="round"/><path d="M1231.5 580.0 L1278.5 550.0" stroke-linecap="round"/><path d="M1231.5 611.0 L1278.5 641.5" stroke-linecap="round"/><path d="M1278.5 641.5 L1252.0 630.8 L1259.0 624.2 Z" stroke-linejoin="round"/>
<path d="M1651.5 331.5 V432 M1651.5 495 V726.5 M1651.5 749 V828"/>
<rect x="1640.5" y="432.5" width="21" height="62" stroke-linejoin="round"/><rect x="1642" y="434" width="18" height="3" fill="#000" stroke="none"/>
<path d="M1636 749 H1667 L1651.5 726.5 Z" stroke-linejoin="round" fill="#fff"/>
<path d="M1632.5 730 L1638 726.5 H1665 L1670.5 722" stroke-linecap="round" stroke-linejoin="round"/>
<path d="M1634.0 829.5 H1669.0 L1651.5 846.5 Z" stroke-linejoin="round"/>
<path d="M1744.5 495 V550 M1744.5 642 V695 M1744.5 760 V828"/>
<rect x="1733.5" y="432.5" width="22" height="62" stroke-linejoin="round"/><rect x="1735" y="434" width="19" height="3" fill="#000" stroke="none"/>
<rect x="1733.5" y="696.5" width="22" height="63" stroke-linejoin="round"/><rect x="1735" y="698" width="19" height="3" fill="#000" stroke="none"/>
<path d="M1727.0 829.5 H1762.0 L1744.5 846.5 Z" stroke-linejoin="round"/>
<path d="M1651.5 595.5 H1697.5"/>
<path d="M1697.5 564.5 V626.5" stroke-linecap="round"/><path d="M1697.5 580.0 L1744.5 550.0" stroke-linecap="round"/><path d="M1697.5 611.0 L1744.5 641.5" stroke-linecap="round"/><path d="M1744.5 641.5 L1718.0 630.8 L1725.0 624.2 Z" stroke-linejoin="round"/>
</g>
<rect x="1163.0" y="325.0" width="13" height="13" fill="#000" stroke="none"/>
<rect x="1272.0" y="325.0" width="13" height="13" fill="#000" stroke="none"/>
<rect x="1645.0" y="325.0" width="13" height="13" fill="#000" stroke="none"/>
<rect x="1163.0" y="589.0" width="13" height="13" fill="#000" stroke="none"/>
<rect x="1645.0" y="589.0" width="13" height="13" fill="#000" stroke="none"/>
<rect x="1366" y="420" width="11" height="10" rx="1" fill="#000"/>
<rect x="1801" y="420" width="11" height="10" rx="1" fill="#000"/>
<g font-family="DejaVu Sans, Liberation Sans, sans-serif" font-size="21">
<text x="996.97" y="238.9" letter-spacing="0.742" fill="#0000ff" >kner 2022</text>
<text x="1238.33" y="293.4" letter-spacing="0.330" fill="#000" >.step temp -20 200 1</text>
<text x="1182.10" y="456.5" letter-spacing="2.067" fill="#000" >R3</text>
<text x="1182.67" y="491.8" letter-spacing="-0.300" fill="#000" >1k</text>
<text x="1291.30" y="456.5" letter-spacing="1.517" fill="#000" >RL1</text>
<text x="1291.97" y="491.8" letter-spacing="0.233" fill="#000" >100</text>
<text x="1351.40" y="418.9" letter-spacing="1.150" fill="#0000ff" >???</text>
<text x="1268.33" y="588.5" letter-spacing="1.667" fill="#000" >Q1</text>
<text x="1269.30" y="623.6" letter-spacing="1.040" fill="#000" >2N2222</text>
<text x="1175.40" y="650.5" letter-spacing="1.933" fill="#000" >D1</text>
<text x="1177.07" y="712.6" letter-spacing="0.733" fill="#000" >1N914</text>
<text x="1128.60" y="728.4" letter-spacing="2.800" fill="#000" >D2</text>
<text x="959.00" y="790.9" letter-spacing="1.318" fill="#000" >KNER_ZENER_5.6</text>
<text x="1291.00" y="721.1" letter-spacing="1.900" fill="#000" >R1</text>
<text x="1291.77" y="755.9" letter-spacing="-0.300" fill="#000" >1k</text>
<text x="944.93" y="585.1" letter-spacing="0.433" fill="#000" >V1</text>
<text x="937.07" y="610.3" letter-spacing="-0.100" fill="#000" >10V</text>
<text x="934.83" y="859" letter-spacing="0.950" fill="#000" >.op</text>
<text x="1664.30" y="456.5" letter-spacing="1.867" fill="#000" >R4</text>
<text x="1664.67" y="491.8" letter-spacing="-0.300" fill="#000" >1k</text>
<text x="1758.00" y="456.5" letter-spacing="2.250" fill="#000" >RL2</text>
<text x="1757.97" y="491.8" letter-spacing="0.233" fill="#000" >100</text>
<text x="1786.40" y="418.9" letter-spacing="1.300" fill="#0000ff" >???</text>
<text x="1734.93" y="588.5" letter-spacing="2.433" fill="#000" >Q2</text>
<text x="1735.20" y="623.6" letter-spacing="1.040" fill="#000" >2N2222</text>
<text x="1610.90" y="712.6" letter-spacing="1.467" fill="#000" >D3</text>
<text x="1440.80" y="774.6" letter-spacing="1.382" fill="#000" >KNER_ZENER_6.2</text>
<text x="1758.00" y="721.1" letter-spacing="3.267" fill="#000" >R2</text>
<text x="1758.57" y="755.9" letter-spacing="0.000" fill="#000" >1k</text>
<text transform="translate(1024 563.5) rotate(-90)" letter-spacing="0.9">+10V</text>
</g>
</svg>
<div class="abs" style="left:0;top:989px;width:920px;height:1px;background:#808080"></div><div class="abs" style="left:923px;top:989px;width:928px;height:1px;background:#808080"></div>
</body></html>
